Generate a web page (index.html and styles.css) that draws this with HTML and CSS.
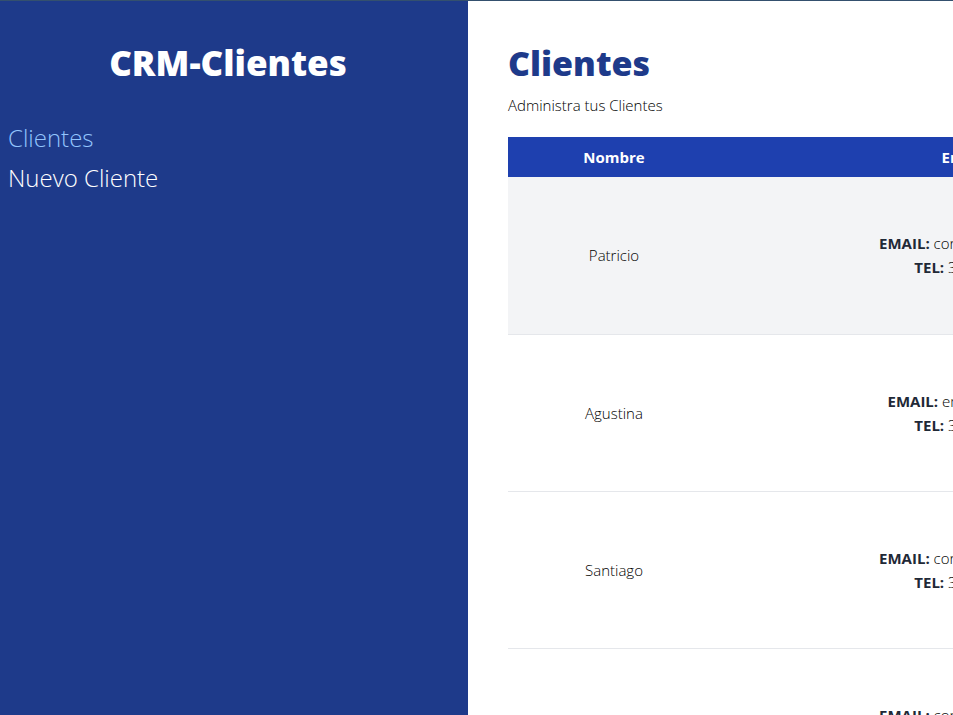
FILE: index.html
```html
<!DOCTYPE html>
<html lang="es">
<head>
<meta charset="utf-8">
<title>CRM-Clientes</title>
<link rel="stylesheet" href="styles.css">
</head>
<body>
<div class="layout">
  <aside class="sidebar">
    <h2 class="brand">CRM-Clientes</h2>
    <nav class="nav">
      <a class="nav-link active" href="#">Clientes</a>
      <a class="nav-link" href="#">Nuevo Cliente</a>
    </nav>
  </aside>
  <main class="main">
    <h1 class="title">Clientes</h1>
    <p class="subtitle">Administra tus Clientes</p>
    <table class="table">
      <thead>
        <tr>
          <th class="col-name">Nombre</th>
          <th class="col-contact">Empresa</th>
          <th class="col-actions">Acciones</th>
        </tr>
      </thead>
      <tbody>
        <tr class="row alt">
          <td>Patricio</td>
          <td><p><span class="label">Email:</span> correo@correo.com</p><p><span class="label">Tel:</span> 3512345678</p></td>
          <td></td>
        </tr>
        <tr class="row">
          <td>Agustina</td>
          <td><p><span class="label">Email:</span> email@email.com</p><p><span class="label">Tel:</span> 3519876543</p></td>
          <td></td>
        </tr>
        <tr class="row">
          <td>Santiago</td>
          <td><p><span class="label">Email:</span> correo@correo.com</p><p><span class="label">Tel:</span> 3515551234</p></td>
          <td></td>
        </tr>
        <tr class="row">
          <td>Lucía</td>
          <td><p><span class="label">Email:</span> correo@correo.com</p><p><span class="label">Tel:</span> 3514443322</p></td>
          <td></td>
        </tr>
      </tbody>
    </table>
  </main>
</div>
</body>
</html>
```

FILE: styles.css
```css
* { box-sizing: border-box; }
html, body { margin: 0; padding: 0; overflow: hidden; }
body {
  font-family: "Open Sans", "Noto Sans", sans-serif;
  font-weight: 300;
  color: #000;
  border-top: 1px solid #34506e;
}
.layout {
  display: flex;
  height: 714px;
}
.sidebar {
  flex: 0 0 468px;
  background: #1e3a8a;
  padding: 8px;
}
.brand {
  margin: 34px 12px 0 0;
  text-align: center;
  color: #fff;
  font-family: "Noto Sans", "Open Sans", sans-serif;
  font-weight: 900;
  font-size: 35px;
  line-height: 40px;
}
.nav {
  display: flex;
  flex-direction: column;
  margin-top: 39px;
  gap: 8px;
}
.nav-link {
  color: #fff;
  text-decoration: none;
  font-size: 24px;
  line-height: 32px;
}
.nav-link.active { color: #93c5fd; }
.main {
  flex: 1;
  min-width: 0;
  padding: 38px 40px 40px;
  overflow: hidden;
}
.title {
  margin: 0;
  color: #1e3a8a;
  font-family: "Noto Sans", "Open Sans", sans-serif;
  font-weight: 900;
  font-size: 34px;
  line-height: 48px;
}
.subtitle {
  margin: 6px 0 0;
  font-size: 15px;
  line-height: 24px;
}
.table {
  margin-top: 20px;
  border-collapse: collapse;
  width: 916px;
  table-layout: fixed;
}
.table th {
  background: #1e40af;
  color: #fff;
  font-weight: 700;
  font-size: 15px;
  height: 40px;
  padding: 0;
}
.col-name { width: 212px; }
.col-contact { width: 508px; }
.col-actions { width: 196px; }
.row td {
  height: 157px;
  padding: 0;
  text-align: center;
  font-size: 15px;
  border-bottom: 1px solid #e5e7eb;
}
.row.alt td { background: #f3f4f6; }
.row td p { margin: 0; line-height: 24px; }
.label {
  color: #1f2937;
  font-weight: 700;
  text-transform: uppercase;
}
```
